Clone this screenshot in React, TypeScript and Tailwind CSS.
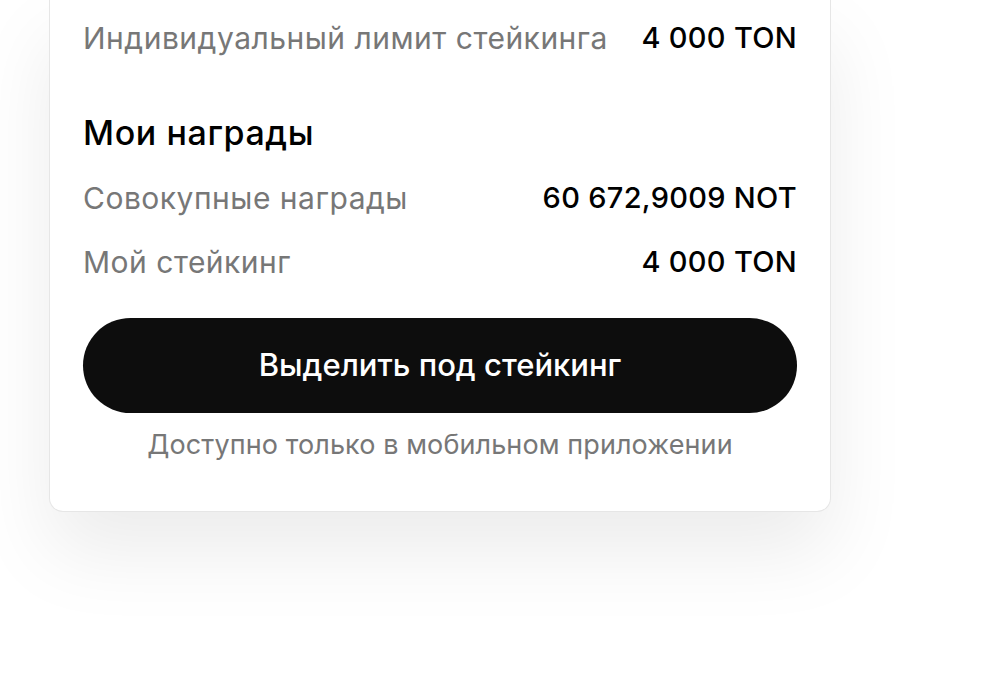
const Row = ({ label, value }: { label: string; value: string }) => (
  <div className="flex items-center justify-between h-[40px]">
    <span className="text-[#777777] text-[30px] leading-[40px] tracking-[0.5px]">{label}</span>
    <span className="text-black text-[29px] leading-[40px] tracking-[0.3px] font-medium">{value}</span>
  </div>
);

export default function App() {
  return (
    <div className="w-[1008px] h-[678px] bg-white overflow-hidden font-['Inter',sans-serif]">
      <div className="ml-[49px] w-[782px] bg-white border border-t-0 border-[#e6e6e6] rounded-b-[14px] shadow-[0_40px_80px_rgba(0,0,0,0.08)] px-[33px] pt-[18px] pb-[48px] flex flex-col">
        <Row label="Индивидуальный лимит стейкинга" value="4 000 TON" />
        <h2 className="mt-[53px] text-[34px] leading-[44px] tracking-[0.6px] font-medium text-black">Мои награды</h2>
        <div className="mt-[23px] flex flex-col gap-[24px]">
          <Row label="Совокупные награды" value="60 672,9009 NOT" />
          <Row label="Мой стейкинг" value="4 000 TON" />
        </div>
        <button className="mt-[36px] h-[95px] w-full rounded-full bg-[#0d0d0d] text-white text-[31px] font-medium">
          Выделить под стейкинг
        </button>
        <p className="mt-[14px] text-center text-[#777777] text-[27px] leading-[36px] tracking-[0.1px]">
          Доступно только в мобильном приложении
        </p>
      </div>
    </div>
  );
}
